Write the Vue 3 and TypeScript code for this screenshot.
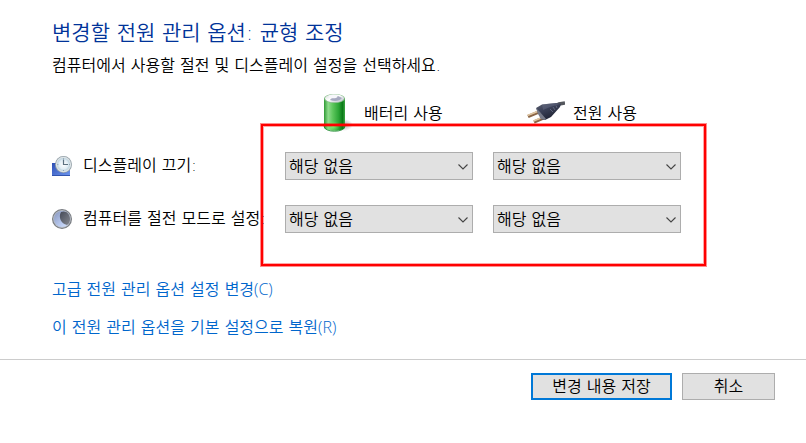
<script setup lang="ts">
import { reactive } from 'vue'

interface Setting {
  id: 'display' | 'sleep'
  label: string
}

const settings: Setting[] = [
  { id: 'display', label: '디스플레이 끄기:' },
  { id: 'sleep', label: '컴퓨터를 절전 모드로 설정:' },
]
const sources = [
  { id: 'battery', label: '배터리 사용' },
  { id: 'plugged', label: '전원 사용' },
]
const values = reactive<Record<string, string>>({
  'display-battery': '해당 없음',
  'display-plugged': '해당 없음',
  'sleep-battery': '해당 없음',
  'sleep-plugged': '해당 없음',
})
</script>

<template>
  <form class="page" @submit.prevent>
    <main class="content">
      <h1>변경할 전원 관리 옵션: 균형 조정</h1>
      <p class="intro">컴퓨터에서 사용할 절전 및 디스플레이 설정을 선택하세요.</p>

      <section class="plan">
        <div class="row head">
          <div v-for="s in sources" :id="s.id" :key="s.id" class="source">
            <svg v-if="s.id === 'battery'" class="source-icon" viewBox="0 0 40 40" aria-hidden="true">
              <defs>
                <linearGradient id="cell" x1="0" x2="1" y1="0" y2="0">
                  <stop offset="0" stop-color="#2f9a35" />
                  <stop offset=".2" stop-color="#8fdc8c" />
                  <stop offset=".42" stop-color="#5cc65c" />
                  <stop offset=".7" stop-color="#2ba536" />
                  <stop offset=".88" stop-color="#0b7a18" />
                  <stop offset="1" stop-color="#3ca743" />
                </linearGradient>
                <linearGradient id="cap" x1="0" x2="1" y1="0" y2="1">
                  <stop offset="0" stop-color="#d5dcd8" />
                  <stop offset=".45" stop-color="#ffffff" />
                  <stop offset="1" stop-color="#b4b8c6" />
                </linearGradient>
                <radialGradient id="shade">
                  <stop offset="0" stop-color="#777" stop-opacity=".65" />
                  <stop offset="1" stop-color="#777" stop-opacity="0" />
                </radialGradient>
                <radialGradient id="glow">
                  <stop offset="0" stop-color="#8cff78" stop-opacity=".9" />
                  <stop offset="1" stop-color="#5de35a" stop-opacity="0" />
                </radialGradient>
              </defs>
              <ellipse cx="28" cy="33" rx="9" ry="6" fill="url(#shade)" />
              <path d="M8 6v29c0 5 21 5 21 0V6Z" fill="url(#cell)" />
              <ellipse cx="17" cy="34" rx="7" ry="5" fill="url(#glow)" />
              <path d="M8 34c0 7 21 7 21 0" fill="none" stroke="#16852a" stroke-width=".8" />
              <ellipse cx="18.500" cy="6.500" rx="10.500" ry="4.500" fill="#85bd88" />
              <ellipse cx="18.500" cy="6.300" rx="9.500" ry="4" fill="url(#cap)" />
              <path d="M14 8c2-3 5-3 8-4l4 2c-2 3-7 4-12 2Z" fill="#a6a9c0" />
              <ellipse cx="17" cy="4.500" rx="4.500" ry="1.800" fill="#f7f7fb" />
            </svg>
            <svg v-else class="source-icon" viewBox="0 0 40 40" aria-hidden="true">
              <defs>
                <linearGradient id="plug" x1="0" x2=".6" y1="0" y2="1">
                  <stop offset="0" stop-color="#5f6270" />
                  <stop offset=".4" stop-color="#3d435a" />
                  <stop offset="1" stop-color="#1d2030" />
                </linearGradient>
              </defs>
              <path d="M30 14 34 12 40 11" fill="none" stroke="#54575d" stroke-width="3.500" />
              <path d="M3 24.500 15 19.500M9 30 22 24.500" stroke="#8a6546" stroke-width="3.400" />
              <path d="M2.500 23.500 15 18.500M8.500 29 22 23.500" stroke="#dfc5a2" stroke-width="1.800" />
              <path d="m11 16 6-3.500 14-1.500 5 1-1 3-9 10-6 3-4-1-2-5Z" fill="url(#plug)" />
              <path d="m11 16 4 4 6 7-1 1-4-1-3-5Z" fill="#777a88" />
              <path d="m17 12.500 13-1.500 5 1-10 3-7 3Z" fill="#656b83" opacity=".5" />
              <path d="m25 17 3 3M28 15l2 3M31 13.500l1 2.500" stroke="#6a7089" stroke-width=".8" />
            </svg>
            <span class="source-label">{{ s.label }}</span>
          </div>
        </div>

        <div v-for="item in settings" :key="item.id" class="row setting">
          <div :id="item.id" class="name">
            <svg v-if="item.id === 'display'" class="name-icon" viewBox="0 0 20 20" aria-hidden="true">
              <defs>
                <linearGradient id="screen" x1="0" x2="1" y1="0" y2="1">
                  <stop offset="0" stop-color="#2d4fb4" />
                  <stop offset="1" stop-color="#6e96ee" />
                </linearGradient>
                <radialGradient id="dial">
                  <stop offset="0" stop-color="#ffffff" />
                  <stop offset=".7" stop-color="#e1edf4" />
                  <stop offset="1" stop-color="#b8cfdc" />
                </radialGradient>
              </defs>
              <path d="M0 7h18v13H0Z" fill="url(#screen)" />
              <path d="M0 19.500h18" stroke="#3154af" />
              <circle cx="11.500" cy="8.500" r="8.500" fill="#93a0a8" />
              <circle cx="11.500" cy="8.500" r="7.700" fill="#dce3e6" />
              <circle cx="11.500" cy="8.500" r="6.500" fill="url(#dial)" />
              <path d="M11.500 3.500v5h4.500" fill="none" stroke="#5d7180" stroke-width="1.200" />
              <path d="M11.500 2.200v1M11.500 14v1M5.300 8.500h1M17 8.500h1" stroke="#91a5b0" />
            </svg>
            <svg v-else class="name-icon" viewBox="0 0 20 20" aria-hidden="true">
              <defs>
                <linearGradient id="moon" x1="0" x2="1" y1="0" y2="1">
                  <stop offset="0" stop-color="#8796bd" />
                  <stop offset=".6" stop-color="#b7c8ee" />
                  <stop offset="1" stop-color="#d8e5ff" />
                </linearGradient>
                <linearGradient id="night" x1="0" x2="1" y1="0" y2="1">
                  <stop offset="0" stop-color="#454a57" />
                  <stop offset="1" stop-color="#858890" />
                </linearGradient>
              </defs>
              <circle cx="10" cy="10" r="10" fill="#777b80" />
              <circle cx="10" cy="10" r="8.900" fill="#b8bdc5" />
              <circle cx="10" cy="10" r="8" fill="url(#moon)" />
              <path d="M9 3c5-2 9 2 9 7 0 3-1 5-3 6C9 15 6 8 9 3Z" fill="url(#night)" />
            </svg>
            <span>{{ item.label }}</span>
          </div>
          <div v-for="s in sources" :key="s.id" class="picker">
            <select v-model="values[`${item.id}-${s.id}`]" :aria-labelledby="`${item.id} ${s.id}`">
              <option>해당 없음</option>
            </select>
            <svg class="chevron" viewBox="0 0 10 6" aria-hidden="true">
              <path d="M.5.5 5 5 9.500.5" fill="none" stroke="#444" stroke-width="1.100" />
            </svg>
          </div>
        </div>
        <div class="highlight" aria-hidden="true"></div>
      </section>

      <nav class="links">
        <a href="#advanced">고급 전원 관리 옵션 설정 변경<span class="key">(C)</span></a>
        <a href="#restore">이 전원 관리 옵션을 기본 설정으로 복원<span class="key">(R)</span></a>
      </nav>
    </main>

    <footer class="actions">
      <button type="submit" class="save">변경 내용 저장</button>
      <button type="button" class="cancel">취소</button>
    </footer>
  </form>
</template>

<style>
body {
  background: #fff;
}
</style>

<style scoped>
.page,
.page select,
.page button {
  font-family: "DejaVu Sans", "Noto Sans CJK KR", sans-serif;
  font-size: 16px;
  font-weight: 350;
  line-height: 24px;
  color: #000;
}
.content {
  padding: 17px 52px 19px;
}
h1 {
  margin: 0;
  font-size: 21px;
  line-height: 32px;
  font-weight: 350;
  color: #003399;
}
.intro {
  margin: 5px 0 14px;
}
.plan {
  position: relative;
}
.row {
  display: grid;
  grid-template-columns: 213px 188px 188px;
  column-gap: 20px;
  align-items: center;
}
.head {
  margin-bottom: 20px;
}
.source {
  display: flex;
  align-items: center;
  gap: 8px;
  padding-left: 32px;
  white-space: nowrap;
}
.source:first-child {
  grid-column: 2;
  padding-left: 31px;
}
.source-icon {
  width: 40px;
  height: 40px;
  flex: none;
}
.source-label {
  padding-top: 3px;
}
.setting + .setting {
  margin-top: 25px;
}
.name {
  display: flex;
  align-items: center;
  gap: 11px;
  white-space: nowrap;
}
.name-icon {
  width: 20px;
  height: 20px;
  flex: none;
}
.picker {
  position: relative;
}
.page select {
  display: block;
  appearance: none;
  width: 100%;
  height: 28px;
  margin: 0;
  padding: 1px 24px 0 3px;
  border: 1px solid #adadad;
  border-radius: 0;
  background: #e1e1e1;
}
.chevron {
  position: absolute;
  top: 12px;
  right: 5px;
  width: 10px;
  height: 6px;
  pointer-events: none;
}
.highlight {
  position: absolute;
  box-sizing: border-box;
  left: 209px;
  top: 32px;
  width: 445px;
  height: 142px;
  border: 2px solid #f00;
  box-shadow: 0 0 0 1px rgba(255, 0, 0, 0.45), inset 0 0 0 1px rgba(255, 0, 0, 0.35);
  pointer-events: none;
}
.links {
  display: flex;
  flex-direction: column;
  align-items: flex-start;
  gap: 14px;
  margin-top: 45px;
}
.links a {
  line-height: 24px;
  color: #0066cc;
  text-decoration: none;
}
.key {
  font-family: "Open Sans", sans-serif;
  line-height: 1;
}
.actions {
  display: flex;
  justify-content: flex-end;
  gap: 10px;
  padding: 13px 31px;
  border-top: 1px solid #ccc;
}
.page button {
  height: 27px;
  padding: 0;
  border: 1px solid #adadad;
  background: #e1e1e1;
}
.page .save {
  width: 141px;
  border: 2px solid #0078d7;
}
.cancel {
  width: 93px;
}
</style>
